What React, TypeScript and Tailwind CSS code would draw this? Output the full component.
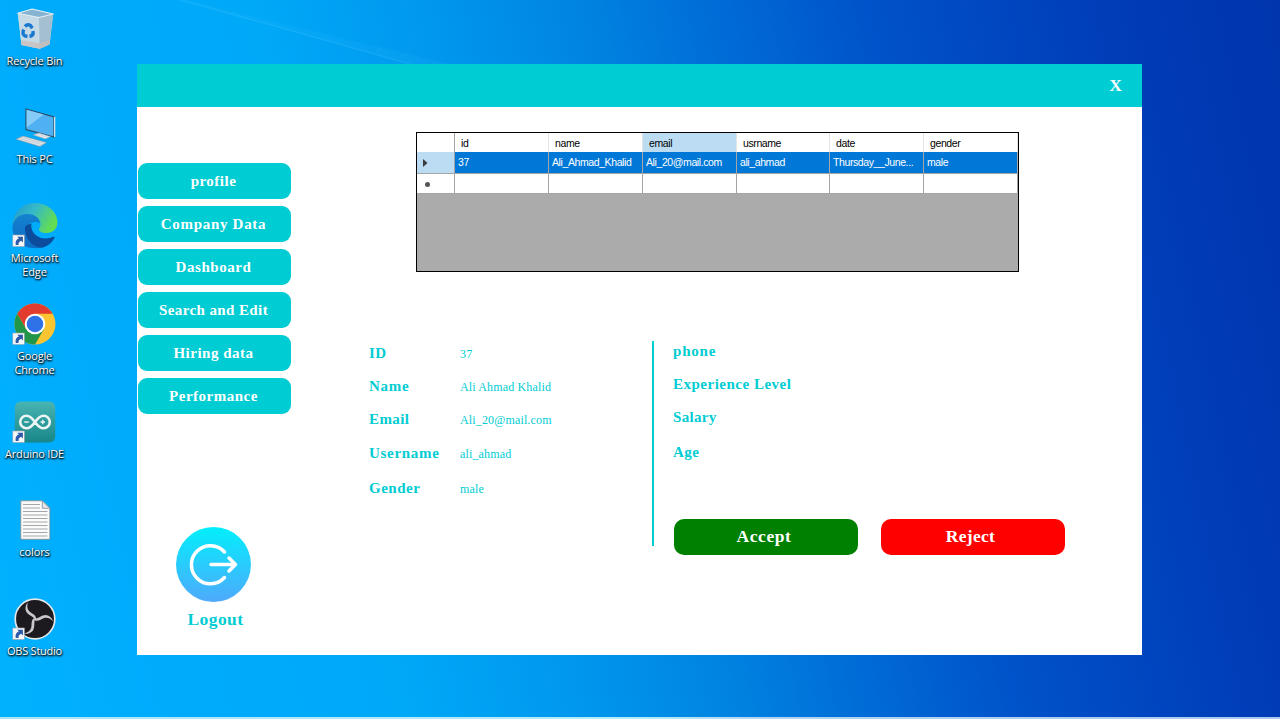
import React from "react";

const serif = "font-['Liberation_Serif',serif]";
const sans = "font-['Liberation_Sans',sans-serif]";

function Shortcut() {
  return (
    <g>
      <rect x="2.800" y="33" width="11.500" height="11.500" fill="#f4f6f8" stroke="#9aa5ad" strokeWidth=".6" />
      <path d="M5.700 43c-.6-3.600.6-5.600 3.200-6.400L7.300 34.800h5.600v5.600l-1.700-1.600c-1.900.8-2.900 2-2.700 4.200z" fill="#2c5aa8" />
    </g>
  );
}

function RecycleBin() {
  return (
    <>
      <path d="M7.800 8.300 11.500 40l18.300 3.800 9.700-4.300L43.200 9 22.200 4z" fill="#b4cede" />
      <path d="M7.800 8.300 29 12.500l.8 31.300L11.500 40z" fill="#c6dae6" />
      <path d="m29 12.500 14.200-3.500-3.700 30.500-9.700 4.300z" fill="#a3bfd0" />
      <path d="m11 35.500.5 4.500 18.300 3.800 9.700-4.300.6-4.500-10.300 3z" fill="#cbbdb8" fillOpacity=".75" />
      <path d="M7.800 8.300 22.200 4l21 5L29 12.500z" fill="#86b3cf" stroke="#e3eef5" strokeWidth="1.100" strokeLinejoin="round" />
      <g fill="none" stroke="#1b78cf" strokeWidth="3.400">
        <path d="M15 21.500q2.500-2.800 5.500-1l1.800 2.700" />
        <path d="M13.700 24.500q-2 4.500 1.300 6.500l2.500.5" />
        <path d="M23 26q1 4.500-3.500 5.500" />
      </g>
    </>
  );
}

function ThisPC() {
  return (
    <>
      <path d="m16 6 28 8v20l-28-7.500z" fill="#4fb0f2" stroke="#2c4d66" strokeWidth="1.200" />
      <path d="m16.600 6.800 17 4.800-17 13z" fill="#86ccf8" />
      <path d="m44 14 1.300-.4v20.300L44 34z" fill="#d4dde2" />
      <path d="m29 30 6 1.700v2.500l-6-1.600z" fill="#a8b4bc" />
      <path d="m23 32 5.500-2 12 3.500-5 2.500z" fill="#d9e1e6" stroke="#8fa0ab" strokeWidth=".5" />
      <path d="m6 36.300 7-3.300 23.500 6.500-6.500 4z" fill="#dde3e7" stroke="#8496a2" strokeWidth=".6" />
      <path d="m8.500 35.300 24 6.500M10.700 34.200 34.500 40.500" stroke="#b9c3ca" strokeWidth=".6" />
    </>
  );
}

function Edge() {
  return (
    <>
      <defs>
        <linearGradient id="edgeTop" x1="0" y1="0" x2="1" y2=".4">
          <stop offset="0" stopColor="#2397cf" />
          <stop offset=".5" stopColor="#35b9c8" />
          <stop offset="1" stopColor="#62dc55" />
        </linearGradient>
        <linearGradient id="edgeBody" x1="0" y1="0" x2="0" y2="1">
          <stop offset="0" stopColor="#1482cf" />
          <stop offset="1" stopColor="#0c6cc4" />
        </linearGradient>
      </defs>
      <path d="M2.500 23C3.500 9.500 13 1 25 1 38 1 47.500 10.500 47.500 20c0 7-4.500 11-11 11-6 0-8-2.500-7.500-4 .5-1.500 1.500-2 1.500-5 0-4.500-5-9-12-9-8 0-12 4-16 10z" fill="url(#edgeTop)" />
      <path d="M2.500 24C4 16 10 12 17.500 12 25 12 30 16.500 30 21.500c-3-2.500-9-2-11.500 2-3 7 3 17 15 21.500C20 49 2 43 2.500 24z" fill="url(#edgeBody)" />
      <path d="M15 26c0 10 7 20 18 19.500 5-1.500 9-5 11.500-9.500.5-1-.3-1.700-1.300-1.200-10 4.500-21-.5-22-10.300 0-1 .2-1.800.5-2.700-4 .5-6.700 2-6.700 4.200z" fill="#0b4c9c" />
      <Shortcut />
    </>
  );
}

function Chrome() {
  return (
    <>
      <circle cx="25" cy="24" r="20.500" fill="#fbc531" />
      <path d="M25 13.700h17.600A20.500 20.500 0 0 0 7.250 13.750L16 29z" fill="#e33b2e" />
      <path d="M7.250 13.750A20.500 20.500 0 0 0 25 44.500L34 29 16 29z" fill="#229648" />
      <circle cx="25" cy="24" r="10.300" fill="#fff" />
      <circle cx="25" cy="24" r="8.300" fill="#2f72e8" />
      <Shortcut />
    </>
  );
}

function Arduino() {
  return (
    <>
      <defs>
        <linearGradient id="ardBg" x1="0" y1="0" x2="0" y2="1">
          <stop offset="0" stopColor="#48b5b3" />
          <stop offset="1" stopColor="#188588" />
        </linearGradient>
      </defs>
      <rect x="4.800" y="3.500" width="40.500" height="41" rx="6" fill="url(#ardBg)" />
      <path d="M25 24c-3-4.300-5.500-6.300-8.500-6.300a6.300 6.300 0 0 0 0 12.600c3 0 5.500-2 8.500-6.300s5.500-6.300 8.500-6.300a6.300 6.300 0 0 1 0 12.600c-3 0-5.500-2-8.500-6.300z" fill="none" stroke="#eaf5f4" strokeWidth="2.600" />
      <path d="M14.300 24h4.400M30.500 24H35M32.800 21.800v4.400" stroke="#eaf5f4" strokeWidth="1.400" />
      <Shortcut />
    </>
  );
}

function TextFile() {
  return (
    <>
      <path d="M10.800 4.800h21.500l7.500 7.500v31h-29z" fill="#fbfbfb" stroke="#858b90" strokeWidth=".8" />
      <path d="M32.300 4.800v7.500h7.500z" fill="#e4e7e9" stroke="#858b90" strokeWidth=".8" />
      <path d="M13 8.500h17M13 12h17M13 15.500h24.500M13 19h24.500M13 22.500h24.500M13 26h24.500M13 29.500h24.500M13 33h24.500M13 36.500h24.500M13 40h24.500" stroke="#a3a7aa" strokeWidth="1.200" />
    </>
  );
}

function Obs() {
  return (
    <>
      <circle cx="25" cy="24" r="19.800" fill="#1d1a1f" stroke="#e3e8ea" strokeWidth="1.700" />
      <g fill="#c9c7cb">
        {[0, 120, 240].map((a) => (
          <path
            key={a}
            transform={`rotate(${a} 25 24)`}
            d="M25.400 24.500C23.500 21.600 18.300 20.500 16 16.300 14.900 13.200 15.600 9.800 17.800 7.300 16.800 11.500 17.200 14.300 19.500 16.500 22 18.700 25.500 19.500 26.300 23.500z"
          />
        ))}
      </g>
      <Shortcut />
    </>
  );
}

const desktopItems = [
  { name: "Recycle Bin", icon: <RecycleBin />, tracking: "tracking-[-0.15px]" },
  { name: "This PC", icon: <ThisPC />, tracking: "tracking-[-0.2px]" },
  { name: "Microsoft Edge", icon: <Edge />, tracking: "tracking-[-0.1px]" },
  { name: "Google Chrome", icon: <Chrome />, tracking: "tracking-[-0.2px]" },
  { name: "Arduino IDE", icon: <Arduino />, tracking: "tracking-[-0.2px]" },
  { name: "colors", icon: <TextFile />, tracking: "tracking-[-0.1px]" },
  { name: "OBS Studio", icon: <Obs />, tracking: "tracking-[-0.25px]" },
];

function Desktop() {
  return (
    <div className="flex w-[137px] shrink-0 flex-col pt-[5px] font-['Open_Sans',sans-serif]">
      {desktopItems.map((d) => (
        <div key={d.name} className="flex h-[98.300px] w-[69px] flex-col items-center">
          <svg viewBox="0 0 50 48" className="h-[48px] w-[50px] shrink-0">{d.icon}</svg>
          <span
            className={`mt-px w-[66px] text-center text-[11px] leading-[14px] text-white [text-shadow:1px_1px_2px_#000,0_1px_2px_#000] ${d.tracking}`}
          >
            {d.name}
          </span>
        </div>
      ))}
    </div>
  );
}

const navItems = [
  { name: "profile", tracking: "tracking-[0.5px]" },
  { name: "Company Data", tracking: "tracking-[0.7px]" },
  { name: "Dashboard", tracking: "tracking-[0.55px]" },
  { name: "Search and Edit", tracking: "tracking-[0.4px]" },
  { name: "Hiring data", tracking: "tracking-[0.5px]" },
  { name: "Performance", tracking: "tracking-[0.5px]" },
];

function Sidebar() {
  return (
    <aside className="flex w-[231px] shrink-0 flex-col pt-14 pl-px">
      <nav className="flex w-[153px] flex-col gap-[7px]">
        {navItems.map((n) => (
          <button
            key={n.name}
            className={`h-9 rounded-[9px] bg-[#00ccd3] pt-px pr-[2px] text-[15px] font-bold text-white ${n.tracking}`}
          >
            {n.name}
          </button>
        ))}
      </nav>
      <div className="mt-[113px] ml-[38px] flex w-[75px] flex-col items-center">
        <svg viewBox="0 0 75 75" className="size-[75px]">
          <defs>
            <linearGradient id="logoutBg" x1="0" y1="0" x2="0" y2="1">
              <stop offset="0" stopColor="#02effc" />
              <stop offset="1" stopColor="#4fa9fc" />
            </linearGradient>
          </defs>
          <circle cx="37.500" cy="37.500" r="37.500" fill="url(#logoutBg)" />
          <path
            d="M48.500 25A19 19 0 1 0 48.500 50.500M35 37.500H59M53 31l6.500 6.500L53 44"
            fill="none"
            stroke="#fff"
            strokeWidth="3.500"
            strokeLinecap="round"
            strokeLinejoin="round"
          />
        </svg>
        <span className="mt-[5px] ml-1 text-[17.500px] leading-6 font-bold tracking-[0.400px] text-[#00ccd3]">Logout</span>
      </div>
    </aside>
  );
}

const columns = ["id", "name", "email", "usrname", "date", "gender"];
const record = ["37", "Ali_Ahmad_Khalid", "Ali_20@mail.com", "ali_ahmad", "Thursday__June...", "male"];
const gridCols = "grid grid-cols-[38px_94px_94px_94px_93px_94px_94px]";

function DataGrid() {
  return (
    <div className={`ml-12 h-[140px] w-[603px] border border-black bg-[#ababab] text-[10.500px] tracking-[-0.400px] text-black ${sans}`}>
      <div className={`${gridCols} h-[19px] bg-white`}>
        <div className="border-r border-b border-[#a5a5a5]" />
        {columns.map((c) => (
          <div
            key={c}
            className={`border-r border-b border-r-[#e3e3e3] border-b-[#a5a5a5] pl-[6px] leading-5 ${c === "email" ? "bg-[#bcdcf4]" : ""}`}
          >
            {c}
          </div>
        ))}
      </div>
      <div className={`${gridCols} h-[21px]`}>
        <div className="flex items-center border-r border-[#a5a5a5] bg-[#bcdcf4] pl-[6px]">
          <svg viewBox="0 0 5 8" className="h-2 w-[5px]">
            <path d="M0 0 4.500 4 0 8z" fill="#3a3a3a" />
          </svg>
        </div>
        {record.map((v) => (
          <div key={v} className="border-r border-[#a5a5a5] bg-[#0078d7] pl-[3px] leading-[21px] whitespace-nowrap text-white">
            {v}
          </div>
        ))}
      </div>
      <div className={`${gridCols} h-[21px]`}>
        <div className="flex items-center border border-l-0 border-[#a5a5a5] bg-white pt-px pl-2">
          <span className="size-[5px] rounded-full bg-[#555]" />
        </div>
        {columns.map((c) => (
          <div key={c} className="border-t border-r border-b border-[#a5a5a5] bg-white" />
        ))}
      </div>
    </div>
  );
}

const leftFields = [
  { label: "ID", value: "37", height: "h-[33px]", tracking: "tracking-[0.5px]" },
  { label: "Name", value: "Ali Ahmad Khalid", height: "h-[33px]", tracking: "tracking-[0.75px]" },
  { label: "Email", value: "Ali_20@mail.com", height: "h-[34px]", tracking: "tracking-[0.4px]" },
  { label: "Username", value: "ali_ahmad", height: "h-[35px]", tracking: "tracking-[0.7px]" },
  { label: "Gender", value: "male", height: "h-5", tracking: "tracking-[0.5px]" },
];

const rightFields = [
  { label: "phone", height: "h-[33px]", tracking: "tracking-[0.8px]" },
  { label: "Experience Level", height: "h-[33px]", tracking: "tracking-[0.5px]" },
  { label: "Salary", height: "h-[35px]", tracking: "tracking-[0.3px]" },
  { label: "Age", height: "h-[21px]", tracking: "tracking-[0.5px]" },
];

function Details() {
  return (
    <div className="mt-[69px] flex h-[205px] text-[#00ccd3]">
      <div className="w-[284px] pt-[2px]">
        {leftFields.map((f) => (
          <div key={f.label} className={`flex leading-5 ${f.height}`}>
            <span className={`w-[92px] pl-px text-[15px] font-bold ${f.tracking}`}>{f.label}</span>
            <span className="pt-px text-[12px] tracking-[0.150px]">{f.value}</span>
          </div>
        ))}
      </div>
      <div className="w-[2px] bg-[#00ccd3]" />
      <div className="pl-[19px]">
        {rightFields.map((f) => (
          <div key={f.label} className={`text-[15px] leading-5 font-bold ${f.height} ${f.tracking}`}>
            {f.label}
          </div>
        ))}
        <div className="mt-14 flex gap-[23px] pl-px font-bold text-white">
          <button className="h-9 w-[184px] rounded-[10px] bg-[#008000] pr-[4px] pb-px text-[17.500px] tracking-[0.600px]">
            Accept
          </button>
          <button className="h-9 w-[184px] rounded-[10px] bg-[#ff0000] pr-[5px] pb-px text-[17.500px] tracking-[0.300px]">
            Reject
          </button>
        </div>
      </div>
    </div>
  );
}

export default function App() {
  return (
    <div className="relative flex h-[719px] w-[1280px] overflow-hidden bg-[linear-gradient(78deg,#00b2fe_0%,#00abfc_12%,#00a9f8_28%,#0098ee_40%,#0086e2_50%,#006dd7_60%,#0053ca_71%,#0044be_82%,#003ab4_91%,#0035ad_100%)]">
      <svg viewBox="0 0 450 64" className="absolute top-0 left-0 h-16 w-[450px]">
        <path d="M175 0 410 64H450L185 0z" fill="#38c0ff" fillOpacity=".1" />
        <path d="M182 0 410 64" stroke="#4cc6ff" strokeOpacity=".25" strokeWidth="1.200" />
      </svg>
      <Desktop />
      <div className={`relative mt-16 flex h-[591px] w-[1005px] flex-col bg-white ${serif}`}>
        <header className="flex h-[43px] items-center justify-end bg-[#00ccd3] pr-5 text-[17.500px] font-bold text-white">
          X
        </header>
        <div className="flex flex-1">
          <Sidebar />
          <main className="flex-1 pt-[25px]">
            <DataGrid />
            <Details />
          </main>
        </div>
      </div>
      <div className="absolute inset-x-0 bottom-0 h-[2px] bg-[linear-gradient(90deg,#a6e6fb,#b4ecfa_50%,#b0d4f4_60%,#a9c9f0)]" />
    </div>
  );
}
